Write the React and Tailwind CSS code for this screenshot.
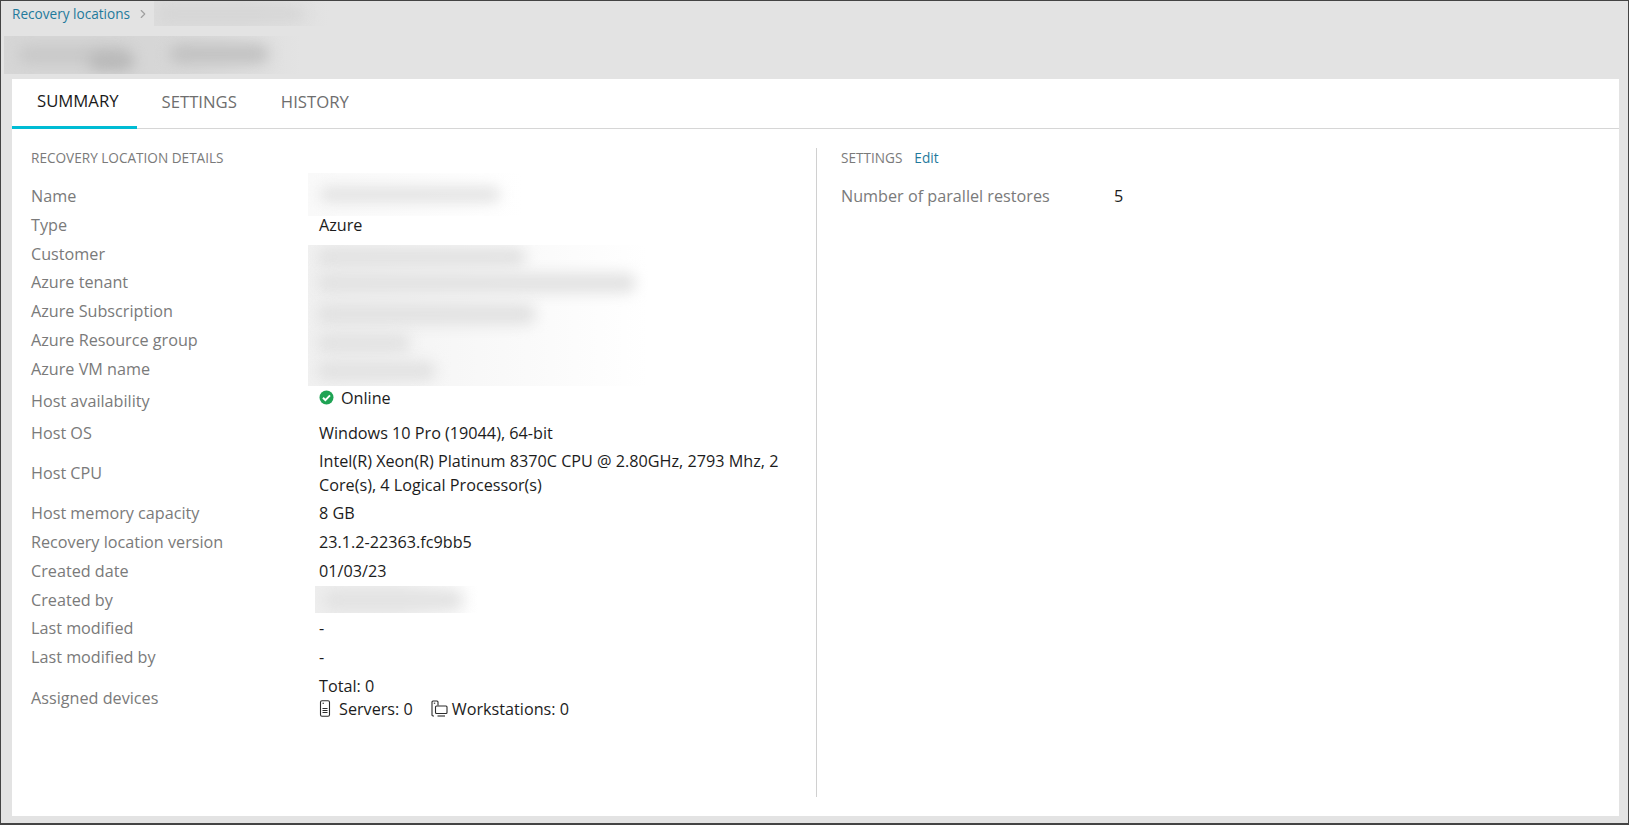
import React from "react";
import { ChevronRight } from "lucide-react";

const font = { fontFamily: '"Open Sans", sans-serif' };

function Row({ label, height = "h-[28.8px]", children }) {
   return (
      <div className={`flex items-center ${height}`}>
         <div className="w-[288px] shrink-0 text-[#7a7a7a]">{label}</div>
         <div className="w-[475px] text-[#1c1c1c] leading-[24px]">{children}</div>
      </div>
   );
}

function Smudge({ className }) {
   return <div className={`absolute rounded-full blur-[7px] ${className}`}></div>;
}

function ServerIcon() {
   return (
      <svg width="12" height="17" viewBox="0 0 12 17" fill="none" stroke="#2b2b2b" strokeWidth="1.1">
         <rect x="1.5" y="0.8" width="9" height="15.4" rx="1.5" />
         <path d="M3.5 3.2h1.5M3.5 8.5h5M3.5 10.5h5M3.5 12.5h5" />
      </svg>
   );
}

function WorkstationIcon() {
   return (
      <svg width="17" height="17" viewBox="0 0 17 17" fill="none" stroke="#2b2b2b" strokeWidth="1.1">
         <path d="M3 16H2a1 1 0 0 1-1-1V2a1 1 0 0 1 1-1h4a1 1 0 0 1 1 1v3.5" />
         <path d="M2.8 3.2h1.4" />
         <rect x="4.5" y="6" width="11.5" height="7.5" rx="1" />
         <path d="M6.5 16h7.5" />
      </svg>
   );
}

export default function App() {
   return (
      <div
         style={font}
         className="flex flex-col h-[825px] bg-[#e3e3e3] border border-b-2 border-[#444444] text-[16.2px] overflow-hidden"
      >
         <div className="flex items-center h-[25px] pl-[11px]">
            <a className="mt-[2px] text-[13.6px] text-[#1f7a9c]">Recovery locations</a>
            <ChevronRight className="ml-[6px] text-[#a0a0a0]" size={14} strokeWidth={2} />
            <div className="relative ml-[4px] w-[175px] h-[25px] overflow-hidden bg-gradient-to-r from-[#dcdcdc] via-[#dcdcdc] to-[#e3e3e3]">
               <Smudge className="left-[5px] top-[7px] w-[145px] h-[12px] bg-[#d4d4d4]" />
            </div>
         </div>
         <div className="relative ml-[3px] mt-[10px] w-[296px] h-[38px] overflow-hidden bg-gradient-to-r from-[#d6d6d6] via-[#d6d6d6] to-[#e3e3e3]">
            <Smudge className="left-[14px] top-[10px] w-[110px] h-[18px] bg-[#c8c8c8]" />
            <Smudge className="left-[85px] top-[16px] w-[45px] h-[18px] bg-[#b8b8b8]" />
            <Smudge className="left-[165px] top-[8px] w-[100px] h-[20px] bg-[#c2c2c2]" />
         </div>
         <div className="flex-1 flex flex-col mt-[5px] ml-[11px] mr-[9px] mb-[7px] bg-white">
            <div className="flex h-[50px] border-b border-[#d6d6d6] text-[16.7px] font-medium">
               <div className="flex items-center pb-[3px] pl-[25px] pr-[18px] -mb-px border-b-[3px] border-[#00bcd4] text-[#1a1a1a]">
                  SUMMARY
               </div>
               <div className="flex items-center pb-[3px] pl-[25px] pr-[19px] text-[#6e6e6e]">SETTINGS</div>
               <div className="flex items-center pb-[3px] pl-[25px] text-[#6e6e6e]">HISTORY</div>
            </div>
            <div className="flex flex-1 pt-[19px] pb-[19px]">
               <div className="w-[805px] pl-[19px] border-r border-[#d0d0d0] leading-none">
                  <div className="-mt-[2px] text-[13.6px] text-[#7a7a7a] h-[23px] flex items-center">
                     RECOVERY LOCATION DETAILS
                  </div>
                  <div className="mt-[12.6px]">
                     <div className="relative">
                        <Row label="Name" />
                        <div className="absolute left-[277px] -top-[9px] w-[216px] h-[43px] overflow-hidden bg-gradient-to-r from-[#f9f9f9] to-white">
                           <Smudge className="left-[12px] top-[14px] w-[180px] h-[15px] bg-[#e2e2e2]" />
                        </div>
                     </div>
                     <Row label="Type" height="h-[29.2px]">Azure</Row>
                     <div className="relative">
                        <Row label="Customer" height="h-[28.4px]" />
                        <Row label="Azure tenant" />
                        <Row label="Azure Subscription" />
                        <Row label="Azure Resource group" />
                        <Row label="Azure VM name" />
                        <div className="absolute left-[277px] top-[5px] w-[340px] h-[141px] overflow-hidden bg-gradient-to-r from-[#f1f1f1] to-white">
                           <Smudge className="left-[8px] top-[2px] w-[210px] h-[20px] bg-[#e2e2e2]" />
                           <Smudge className="left-[8px] top-[28px] w-[320px] h-[20px] bg-[#e2e2e2]" />
                           <Smudge className="left-[8px] top-[58px] w-[220px] h-[22px] bg-[#e2e2e2]" />
                           <Smudge className="left-[8px] top-[88px] w-[95px] h-[20px] bg-[#e2e2e2]" />
                           <Smudge className="left-[8px] top-[116px] w-[120px] h-[20px] bg-[#e2e2e2]" />
                        </div>
                     </div>
                     <Row label="Host availability" height="h-[35.6px]">
                        <div className="flex items-center gap-[7px] -mt-[6px]">
                           <svg width="15" height="15" viewBox="0 0 15 15">
                              <circle cx="7.5" cy="7.5" r="7" fill="#1fa354" />
                              <path d="M4 7.7l2.4 2.4L11 5.4" fill="none" stroke="#fff" strokeWidth="2" />
                           </svg>
                           Online
                        </div>
                     </Row>
                     <Row label="Host OS" height="h-[28.4px]">Windows 10 Pro (19044), 64-bit</Row>
                     <Row label="Host CPU" height="h-[51.6px]">
                        Intel(R) Xeon(R) Platinum 8370C CPU @ 2.80GHz, 2793 Mhz, 2 Core(s), 4 Logical Processor(s)
                     </Row>
                     <Row label="Host memory capacity">8 GB</Row>
                     <Row label="Recovery location version">23.1.2-22363.fc9bb5</Row>
                     <Row label="Created date" height="h-[29.2px]">01/03/23</Row>
                     <Row label="Created by" height="h-[28.4px]">
                        <div className="relative h-[27px] w-[163px] -ml-[4px] overflow-hidden bg-gradient-to-r from-[#eeeeee] via-[#eeeeee] to-white">
                           <Smudge className="left-[8px] top-[4px] w-[140px] h-[20px] bg-[#e2e2e2]" />
                        </div>
                     </Row>
                     <Row label="Last modified">-</Row>
                     <Row label="Last modified by">-</Row>
                     <Row label="Assigned devices" height="h-[53px]">
                        <div className="-mt-[2px]">Total: 0</div>
                        <div className="flex items-center -mt-px">
                           <ServerIcon />
                           <span className="ml-[8px]">Servers: 0</span>
                           <span className="ml-[18px]"><WorkstationIcon /></span>
                           <span className="ml-[4px]">Workstations: 0</span>
                        </div>
                     </Row>
                  </div>
               </div>
               <div className="pl-[24px] flex-1 leading-none">
                  <div className="-mt-[2px] flex items-center h-[23px] text-[13.6px] text-[#7a7a7a]">
                     SETTINGS
                     <a className="ml-[12px] text-[#1f7a9c]">Edit</a>
                  </div>
                  <div className="flex items-center h-[28.8px] mt-[12.6px]">
                     <div className="w-[273px] text-[#7a7a7a]">Number of parallel restores</div>
                     <div className="text-[#1c1c1c]">5</div>
                  </div>
               </div>
            </div>
         </div>
      </div>
   );
}
